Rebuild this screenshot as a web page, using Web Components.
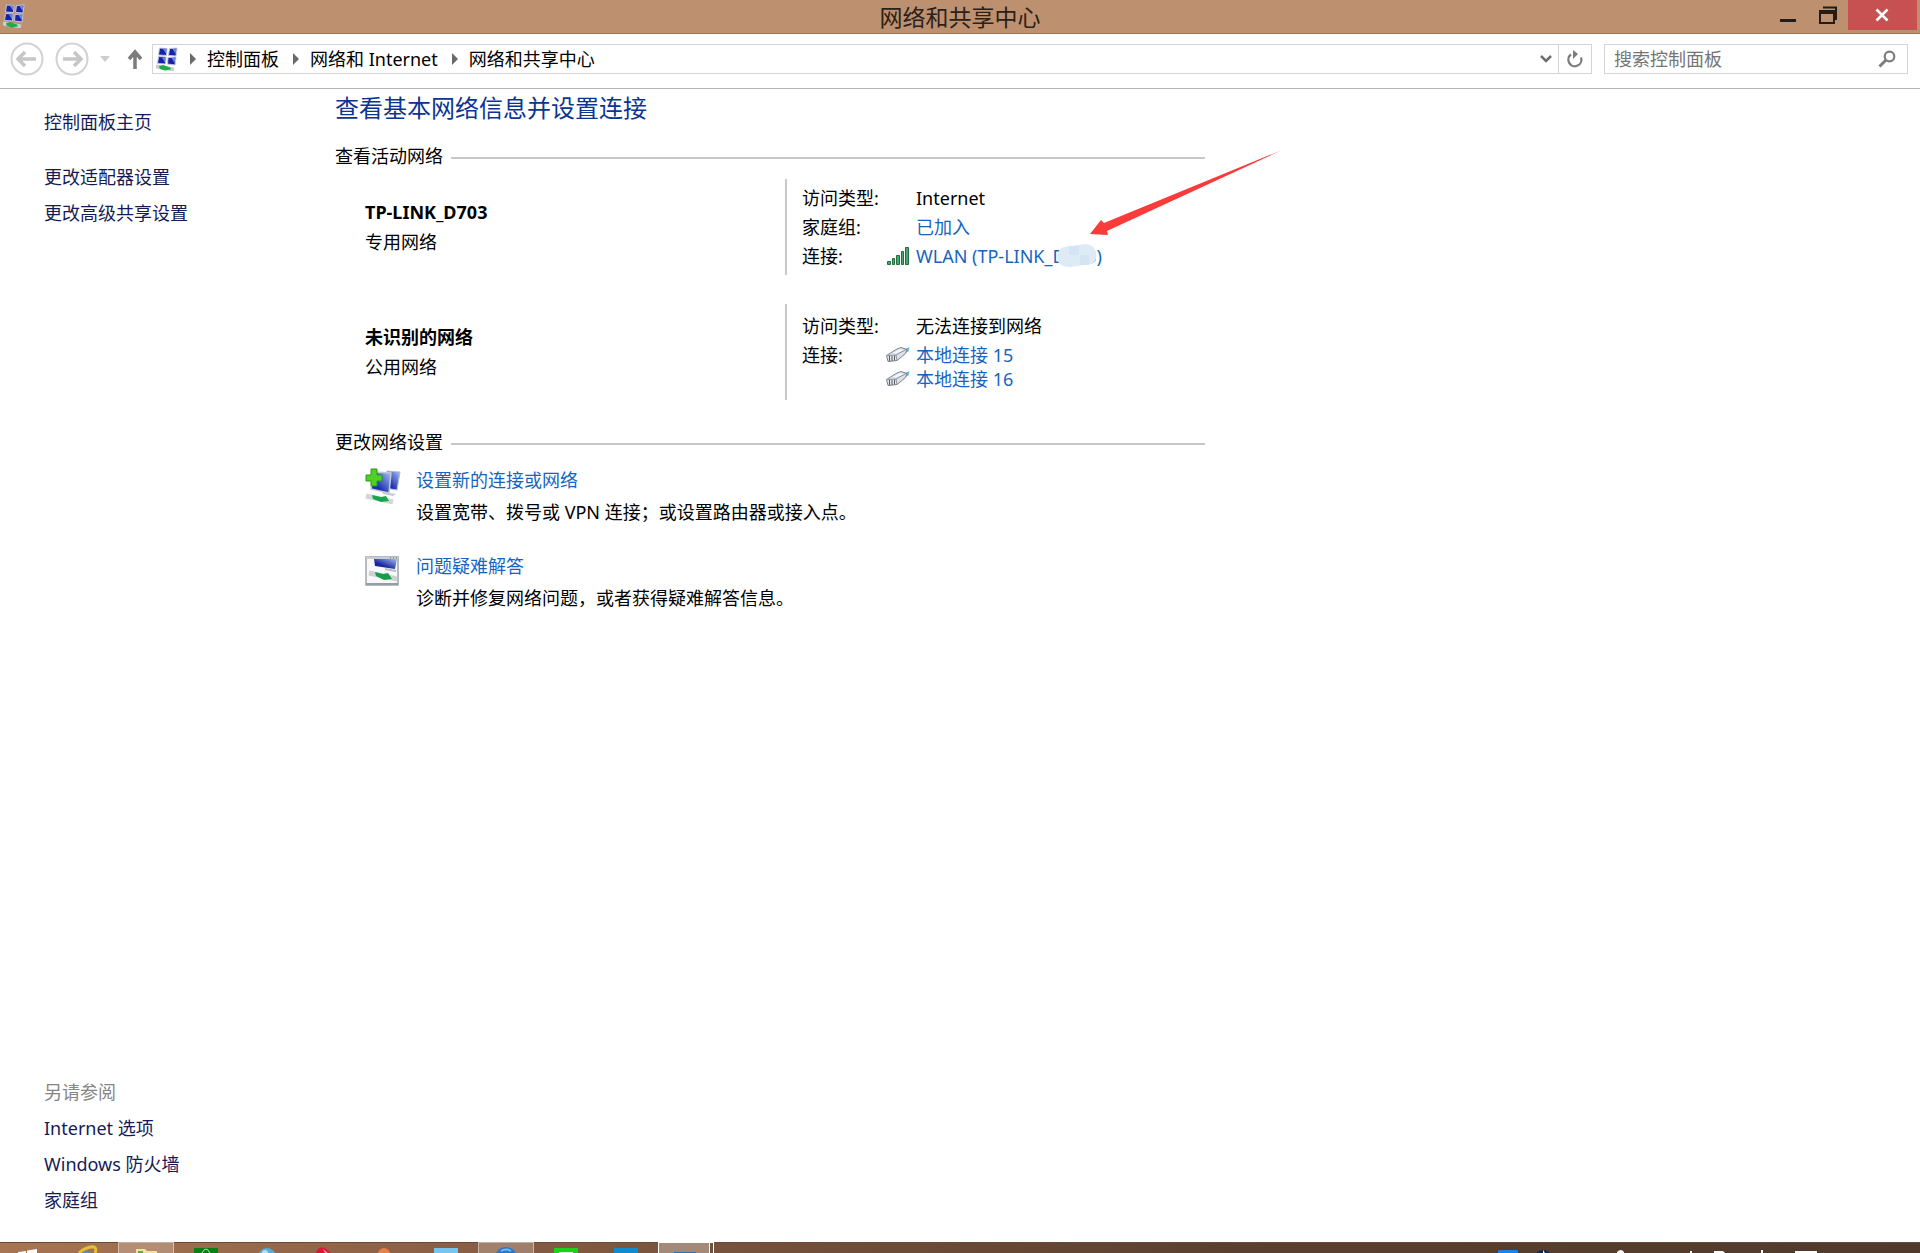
<!DOCTYPE html>
<html lang="zh-CN">
<head>
<meta charset="utf-8">
<title>网络和共享中心</title>
<style>
  html, body { margin: 0; height: 100%; }
  body { font-family: "Noto Sans", "Noto Sans CJK SC", sans-serif; font-size: 18px; line-height: 30px; color: #000; background: #fff; overflow: hidden; }
</style>
</head>
<body>
<control-window></control-window>
<script>
const define = (name, html) => customElements.define(name, class extends HTMLElement {
  constructor() {
    super();
    const t = document.createElement('template');
    t.innerHTML = html;
    this.attachShadow({ mode: 'open' }).append(t.content.cloneNode(true));
  }
});

const centerIcon = `
<svg viewBox="0 0 22 24" width="22" height="24" aria-hidden="true">
  <g stroke="#c3cce0" stroke-width="1">
    <path fill="#1722a8" d="M3.5 1 11 1.500 10.500 8.500 2.500 8z"/><path fill="#1722a8" d="M13.500 1.500 21 1 20 9 12.500 8.500z"/>
    <path fill="#1722a8" d="M2.500 9.500 10 10 9.500 17 1.500 16.500z"/><path fill="#1722a8" d="M12 10.500 20 10 19 18 11.500 17z"/>
  </g>
  <g fill="#6c86de"><path d="M6.500 1.500h4l-.5 5zM16.500 2h4l-1 5zM6 10.500h3.500l-.5 5zM15.500 11h4l-1 5z"/></g>
  <path d="M0 19.500 18 22.500" stroke="#c9ced0" stroke-width="4"/>
  <path d="M3 19.300 7 18l7 2.500 1 1.700-6 1.300-5-1.500z" fill="#19ad4c"/>
</svg>`;

define('title-bar', `
<style>
  :host { display: grid; grid-template-columns: 1fr auto 1fr; height: 33px; background: #bd906f; border-bottom: 1px solid #a0714f; }
  .icon { padding: 4px 3px; line-height: 0; }
  .icon svg { width: 22px; height: 24px; }
  h1 { margin: 0; font-size: 23px; font-weight: 400; line-height: 34px; color: #2c2119; }
  .buttons { display: flex; justify-content: flex-end; padding-right: 3px; }
  button { border: 0; padding: 0; background: none; width: 40px; height: 30px; display: grid; place-items: center; }
  .close { width: 69px; background: #c75050; }
</style>
<div class="icon">${centerIcon}</div>
<h1><slot></slot></h1>
<div class="buttons">
  <button aria-label="最小化"><svg width="18" height="30"><path d="M1 19h16v3H1z" fill="#231d19"/></svg></button>
  <button aria-label="还原"><svg width="18" height="18"><path d="M4 1.500h13V14" fill="none" stroke="#231d19" stroke-width="2"/><path d="M1 5h14v12H1z" fill="none" stroke="#231d19" stroke-width="2"/><path d="M0 4h16v4H0z" fill="#231d19"/></svg></button>
  <button class="close" aria-label="关闭"><svg width="15" height="14"><path d="M1.500 1.500 12.500 12.500M12.500 1.500 1.500 12.500" stroke="#fff" stroke-width="2.500"/></svg></button>
</div>`);

define('nav-bar', `
<style>
  :host { display: flex; align-items: center; height: 55px; box-sizing: border-box; padding: 0 12px 4px 10px; border-bottom: 1px solid #b4b4b4; }
  button { border: 0; padding: 0; background: none; display: grid; place-items: center; }
  .history { display: flex; gap: 11px; }
  .recent { width: 32px; height: 30px; }
  .up { width: 28px; height: 30px; }
  .address { flex: 1; display: flex; align-items: center; height: 30px; box-sizing: border-box; border: 1px solid #d5d5d5; margin: 0 12px 0 3px; padding-left: 3px; }
  nav { flex: 1; display: flex; align-items: center; margin-left: 12px; }
  nav svg { margin-right: 11px; }
  nav a { margin-right: 14px; color: #000; text-decoration: none; line-height: 28px; }
  .drop { width: 24px; height: 28px; }
  .refresh { width: 33px; height: 28px; border-left: 1px solid #d5d5d5; }
  form { display: flex; align-items: center; width: 304px; height: 30px; box-sizing: border-box; border: 1px solid #d5d5d5; padding: 0 11px 0 9px; }
  input { flex: 1; min-width: 0; border: 0; padding: 0; outline: 0; background: none; font: inherit; line-height: 28px; height: 28px; }
  input::placeholder { color: #757575; opacity: 1; }
</style>
<div class="history">
  <button aria-label="后退"><svg width="34" height="34"><circle cx="17" cy="17" r="15.500" fill="none" stroke="#d2d2d2" stroke-width="2"/><path d="M8 17h18M15 10l-7 7 7 7" fill="none" stroke="#c6c6c6" stroke-width="3.500"/></svg></button>
  <button aria-label="前进"><svg width="34" height="34"><circle cx="17" cy="17" r="15.500" fill="none" stroke="#d2d2d2" stroke-width="2"/><path d="M8 17h18M19 10l7 7-7 7" fill="none" stroke="#c6c6c6" stroke-width="3.500"/></svg></button>
</div>
<button class="recent" aria-label="最近浏览的位置"><svg width="10" height="6"><path d="M0 0h10L5 6z" fill="#cdcdcd"/></svg></button>
<button class="up" aria-label="向上"><svg width="16" height="20"><path d="M8 20V3M2 10l6-7 6 7" fill="none" stroke="#7c7c7c" stroke-width="3.500"/></svg></button>
<div class="address">
  ${centerIcon}
  <nav aria-label="地址">
    <svg width="6" height="12"><path d="M0 0 6 6 0 12z" fill="#6a6a6a"/></svg><a href="#">控制面板</a>
    <svg width="6" height="12"><path d="M0 0 6 6 0 12z" fill="#6a6a6a"/></svg><a href="#">网络和 Internet</a>
    <svg width="6" height="12"><path d="M0 0 6 6 0 12z" fill="#6a6a6a"/></svg><a href="#">网络和共享中心</a>
  </nav>
  <button class="drop" aria-label="展开"><svg width="12" height="10"><path d="M1 2l5 5 5-5" fill="none" stroke="#6e6e6e" stroke-width="2.500"/></svg></button>
  <button class="refresh" aria-label="刷新"><svg width="18" height="20"><path d="M5 5.500a6.500 6.500 0 1 0 10 3" fill="none" stroke="#7d7d7d" stroke-width="2.300"/><path d="M7 1l5 4-5 5z" fill="#7d7d7d"/></svg></button>
</div>
<form><input type="text" placeholder="搜索控制面板" aria-label="搜索控制面板"><button type="button" aria-label="搜索"><svg width="18" height="18"><circle cx="11.500" cy="6.500" r="4.800" fill="none" stroke="#7d7d7d" stroke-width="2.200"/><path d="M8 10l-6.500 6.500" stroke="#7d7d7d" stroke-width="3"/></svg></button></form>`);

define('side-bar', `
<style>
  :host { display: flex; flex-direction: column; justify-content: space-between; width: 335px; box-sizing: border-box; padding: 15px 16px 24px 44px; line-height: 36px; color: #151c55; }
  .home { margin-bottom: 19px; }
  a { display: block; color: inherit; text-decoration: none; }
  .heading { color: #868686; }
</style>
<nav><a class="home" href="#">控制面板主页</a><a href="#">更改适配器设置</a><a href="#">更改高级共享设置</a></nav>
<nav><div class="heading">另请参阅</div><a href="#">Internet 选项</a><a href="#">Windows 防火墙</a><a href="#">家庭组</a></nav>`);

define('section-title', `
<style>
  :host { display: flex; align-items: center; gap: 8px; }
  h3 { margin: 0; font: inherit; }
  .rule { flex: 1; height: 2px; margin-top: 4px; background: #c8c8c8; }
</style>
<h3><slot></slot></h3><div class="rule"></div>`);

define('network-row', `
<style>
  :host { display: flex; height: 96px; padding-left: 30px; }
  .name { flex: 1; padding-top: 18px; }
  .name ::slotted(strong) { display: block; }
  .facts { width: 420px; box-sizing: border-box; border-left: 2px solid #c8c8c8; padding-left: 15px; display: flex; flex-direction: column; justify-content: center; }
</style>
<div class="name"><slot name="name"></slot><slot name="kind"></slot></div>
<div class="facts"><slot></slot></div>`);

define('network-fact', `
<style>
  :host { display: grid; grid-template-columns: 84px 1fr; line-height: 29px; }
  .value { padding-left: 30px; }
  :host([links]) .value { padding: 2px 0; line-height: 24px; }
</style>
<div><slot name="label"></slot></div><div class="value"><slot></slot></div>`);

define('text-link', `
<style>
  :host { display: inline; }
  a { color: #1565c0; text-decoration: none; }
</style>
<a href="#"><slot></slot></a>`);

define('connection-link', `
<style>
  :host { display: flex; align-items: center; gap: 6px; height: 24px; }
  svg { display: none; }
  :host([type=wifi]) .wifi, :host([type=lan]) .lan { display: block; }
  a { position: relative; color: #1565c0; text-decoration: none; }
</style>
<svg class="wifi" width="24" height="20"><g fill="#4ea66f" stroke="#22713f"><path d="M1.500 15.500h3v3h-3zM6.500 12.500h2v6h-2zM10.500 9.500h3v9h-3zM15.500 5.500h2v13h-2zM19.500 1.500h3v17h-3z"/></g></svg>
<svg class="lan" width="24" height="18"><path d="M18 3.500 23.500 1l-1 4.500-4.500 2z" fill="#5fb9e2"/><path d="M.5 9.500 11 3l4-1.500 6 2-1.500 4L11 14.500 2 15.500z" fill="#dfe2e8" stroke="#7b808a"/><path d="M1.500 9.500 10 9l10-5.500M10 9l1 5.500" fill="none" stroke="#8e939e"/><path d="M7 7l7-4 3 1-6.500 3.500z" fill="#f4f6f9"/><path d="M3.500 10v5M6 10v5M8.500 9.500v5" stroke="#5d6167"/></svg>
<a href="#"><slot></slot></a>`);

define('smudge-mark', `
<style>
  :host { position: relative; display: inline-block; }
  svg { position: absolute; left: 4px; top: 0; }
</style>
<slot></slot><svg width="42" height="24" aria-hidden="true"><path d="M8 3 30 0Q39 1 40 10 41 17 36 20L14 23Q2 23 1 14 1 5 8 3z" fill="#dfeaf7"/><path d="M13 2h10v9H13zM24 11h9v10h-9z" fill="#d5e3f3"/></svg>`);

define('task-item', `
<style>
  :host { display: grid; grid-template-columns: 36px 1fr; column-gap: 15px; padding-left: 30px; min-height: 86px; box-sizing: border-box; }
  .icon { padding-top: 3px; line-height: 0; }
  .description { margin-top: 2px; }
  svg { display: none; }
  :host([type=connect]) .connect, :host([type=repair]) .repair { display: block; }
</style>
<div class="icon">
  <svg class="connect" width="36" height="36">
    <defs><linearGradient id="m" x1="0" y1="1" x2="1" y2="0"><stop offset=".3" stop-color="#1a2cb0"/><stop offset="1" stop-color="#a9c4f6"/></linearGradient></defs>
    <path d="M22 3 35 4 32 22 20 20z" fill="url(#m)" stroke="#b4bdcd"/><path d="M9 4 26 5 24 25 6 21z" fill="url(#m)" stroke="#c2c9d6" stroke-width="1.500"/>
    <path d="M17 24l14 2-3 2-10-2z" fill="#c6c9ce"/>
    <path d="M1 28 28 34" stroke="#d2d7d5" stroke-width="5"/><path d="M7 27l9 2 5-1 3 5-8 1-8-3z" fill="#18a64b"/>
    <path d="M6 1h6v6h5v6h-5v5H6v-5H1V7h5z" fill="#52cf29" stroke="#2b9818"/>
  </svg>
  <svg class="repair" width="36" height="36" viewBox="0 -1 36 36">
    <defs><linearGradient id="n" x1="0" y1="1" x2="1" y2="0"><stop offset=".35" stop-color="#1825a0"/><stop offset="1" stop-color="#a4bdf0"/></linearGradient></defs>
    <path d="M1 2h32v28H1z" fill="#f7f8f9" stroke="#9ea5ad" stroke-width="1.500"/><path d="M9 4h23l-2 10-20-3z" fill="url(#n)"/><path d="M1 2h32v2H1z" fill="#c8cdd3"/><path d="M25 3h1M28 3h1M31 3h1" stroke="#586069"/>
    <path d="M20 14 31 16" stroke="#b9bdc5" stroke-width="2"/><path d="M4 18 32 24" stroke="#ccd2d4" stroke-width="5"/><path d="M10 17l8 2 5-1 4 6-8 1-8-4z" fill="#159f49"/><path d="M1 29h32" stroke="#959ca4" stroke-width="2"/>
  </svg>
</div>
<div><slot name="link"></slot><div class="description"><slot></slot></div></div>`);

define('pointer-arrow', `
<style>
  :host { position: absolute; left: 754px; top: 60px; pointer-events: none; line-height: 0; }
</style>
<svg width="194" height="88" aria-hidden="true"><path d="M193 1 15 74 12 71 1 85 19 86 18 82Z" fill="#fb3b3a"/></svg>`);

define('network-center', `
<style>
  :host { display: block; position: relative; flex: 1; max-width: 870px; }
  h2 { margin: 0 0 14px; font-size: 24px; line-height: 38px; font-weight: 400; color: #0b3591; }
  .networks { display: flex; flex-direction: column; gap: 29px; margin: 8px 0 27px; }
  .tasks { padding-top: 8px; }
</style>
<h2>查看基本网络信息并设置连接</h2>
<section-title>查看活动网络</section-title>
<div class="networks">
  <network-row>
    <strong slot="name">TP-LINK_D703</strong><span slot="kind">专用网络</span>
    <network-fact><span slot="label">访问类型:</span>Internet</network-fact>
    <network-fact><span slot="label">家庭组:</span><text-link>已加入</text-link></network-fact>
    <network-fact links><span slot="label">连接:</span><connection-link type="wifi">WLAN (TP-LINK_<smudge-mark>D703</smudge-mark>)</connection-link></network-fact>
  </network-row>
  <network-row>
    <strong slot="name">未识别的网络</strong><span slot="kind">公用网络</span>
    <network-fact><span slot="label">访问类型:</span>无法连接到网络</network-fact>
    <network-fact links><span slot="label">连接:</span><connection-link type="lan">本地连接 15</connection-link><connection-link type="lan">本地连接 16</connection-link></network-fact>
  </network-row>
</div>
<section-title>更改网络设置</section-title>
<div class="tasks">
  <task-item type="connect"><text-link slot="link">设置新的连接或网络</text-link>设置宽带、拨号或 VPN 连接；或设置路由器或接入点。</task-item>
  <task-item type="repair"><text-link slot="link">问题疑难解答</text-link>诊断并修复网络问题，或者获得疑难解答信息。</task-item>
</div>
<pointer-arrow></pointer-arrow>`);

const task = (label, art, cls = '') => `<button class="${cls}" aria-label="${label}"><svg width="54" height="10">${art}</svg></button>`;
define('task-bar', `
<style>
  :host { display: flex; justify-content: space-between; height: 11px; overflow: hidden; background: linear-gradient(90deg, #a87553 0, #916448 18%, #76513b 38%, #593f2f 65%, #513a2c 100%); box-shadow: inset 0 1px #6c4a35; }
  .apps { display: flex; gap: 4px; }
  button { width: 56px; height: 11px; padding: 1px 0 0; border: 0; background: none; display: grid; place-items: center; overflow: hidden; }
  button:first-child { width: 54px; }
  .open { background: #ffffff38; box-shadow: inset 1px 1px #ffffff70, inset -1px 0 #ffffff70; }
  .active { background: #ffffff50; box-shadow: inset 1px 1px #fff, inset -1px 0 #fff, inset -4px 0 #6a5141, inset -5px 0 #fff; }
  svg { display: block; }
</style>
<div class="apps">
  ${task('开始', '<path d="M18 9l8-1v2h-8zM27 7.500 37 6v4H27z" fill="#fff"/>')}
  ${task('Internet Explorer', '<path d="M20 10Q28 3 35 4 38 5 36 10" fill="none" stroke="#e6bd38" stroke-width="3"/><path d="M23 10q4-4 9 0z" fill="#3f9ad3"/>')}
  ${task('文件资源管理器', '<path d="M17 10V6h9l2 2h10v2z" fill="#f2e4a0"/><path d="M19 8h5v2h-5z" fill="#68a741"/>', 'open')}
  ${task('应用商店', '<path d="M15 5h24v5H15z" fill="#088012"/><path d="M23 10q4-8 8 0" fill="none" stroke="#b6dcb9" stroke-width="1"/>')}
  ${task('浏览器', '<circle cx="28" cy="14" r="9" fill="#52afe0"/><circle cx="26" cy="10" r="3" fill="#b7e0f3"/>')}
  ${task('音乐', '<path d="M17 10Q19 3 26 5l6 5z" fill="#dc1534"/><path d="M24 6l5 4h-3z" fill="#f797ae"/>')}
  ${task('视频', '<circle cx="25" cy="11" r="6" fill="#e88048"/>')}
  ${task('记事本', '<path d="M15 5h24v5H15z" fill="#76c4ef"/>')}
  ${task('搜狗浏览器', '<circle cx="27" cy="15" r="11" fill="#2878cf"/><path d="M22 8q5-3 10 0" stroke="#74baf1" stroke-width="2" fill="none"/>', 'open')}
  ${task('微信', '<path d="M15 5h24v5H15z" fill="#1bd218"/><path d="M20 9h14v1H20z" fill="#d5f7d4"/>')}
  ${task('邮件', '<path d="M15 5h24v5H15z" fill="#118bcf"/>')}
  ${task('控制面板', '<path d="M15 9h22v1H15z" fill="#2f72b3"/>', 'active')}
</div>
<svg width="422" height="11" aria-hidden="true"><path d="M0 11V9q0-1 2-1h16q2 0 2 1v2z" fill="#1683ee"/><path d="M38 11q7-6 14 0z" fill="#08285d"/><path d="M45 8l2 3h-2zM119 10q4-4 7 0v1h-7zM192 9h2v2h-2zM216 9h9l2 2h-11zM263 8h2v3h-2zM297 9h22v2h-22z" fill="#fff"/></svg>`);

define('control-window', `
<style>
  :host { display: flex; flex-direction: column; height: 100vh; }
  .body { flex: 1; min-height: 0; display: flex; }
</style>
<title-bar>网络和共享中心</title-bar>
<nav-bar></nav-bar>
<div class="body"><side-bar></side-bar><network-center></network-center></div>
<task-bar></task-bar>`);
</script>
</body>
</html>
